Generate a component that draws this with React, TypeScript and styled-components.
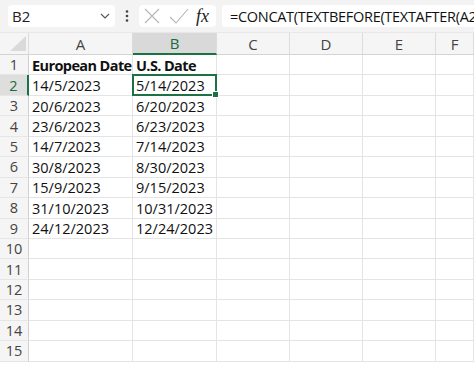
import React from 'react';
import styled, { createGlobalStyle } from 'styled-components';

const GlobalStyle = createGlobalStyle`
  html, body {
    margin: 0;
    padding: 0;
    background: #ffffff;
    font-family: 'Open Sans', 'Noto Sans', Arial, sans-serif;
    overflow: hidden;
  }
`;

const Page = styled.div`
  width: 474px;
  height: 367px;
  overflow: hidden;
`;

const Toolbar = styled.div`
  display: flex;
  align-items: center;
  height: 33px;
  padding: 0 0 0 8px;
  background: #f3f3f3;
  border-bottom: 1px solid #ece6e6;
  box-sizing: border-box;
`;

const Box = styled.div<{ width?: number }>`
  display: flex;
  align-items: center;
  height: 22px;
  width: ${(p) => (p.width ? `${p.width}px` : 'auto')};
  flex-shrink: 0;
  background: #ffffff;
  border-radius: 4px;
  box-sizing: border-box;
`;

const NameBox = styled(Box)`
  justify-content: space-between;
  padding: 0 5px 0 4px;
  font-size: 15px;
  color: #222;
`;

const FormulaBox = styled(Box)`
  flex: 1 1 auto;
  min-width: 0;
  padding-left: 8px;
  margin-left: 6px;
  font-size: 14.5px;
  letter-spacing: -0.3px;
  color: #111;
  white-space: nowrap;
  overflow: hidden;
  border-radius: 4px 0 0 4px;
`;

const Dots = styled.div`
  width: 24px;
  flex-shrink: 0;
  display: flex;
  justify-content: center;
`;

const IconBox = styled(Box)`
  padding: 0 4px;
  justify-content: space-between;
`;

const Fx = styled.span`
  font-family: 'Liberation Serif', 'DejaVu Serif', serif;
  font-style: italic;
  font-size: 18px;
  color: #222;
  margin-right: 3px;
`;

const Sheet = styled.div`
  display: grid;
  grid-template-columns: 29px 104px 84px 73px 73px 73px 1fr;
  grid-template-rows: 22px;
  grid-auto-rows: 20.45px;
  background: #ffffff;
`;

const Corner = styled.div`
  background: #f5f5f5;
  border-bottom: 1px solid #d4d4d4;
  border-right: 1px solid #dcdcdc;
  box-sizing: border-box;
  display: flex;
  align-items: flex-end;
  justify-content: flex-end;
  padding: 0 2px 3px 0;
`;

const ColHead = styled.div<{ active?: boolean }>`
  display: flex;
  align-items: center;
  justify-content: center;
  font-size: 15px;
  color: ${(p) => (p.active ? '#1a6b40' : '#444')};
  background: ${(p) => (p.active ? '#d9d9d9' : '#f5f5f5')};
  border-right: 1px solid #dcdcdc;
  border-bottom: ${(p) => (p.active ? '2px solid #1a7343' : '1px solid #d4d4d4')};
  box-sizing: border-box;
`;

const RowHead = styled.div<{ active?: boolean }>`
  display: flex;
  align-items: center;
  justify-content: center;
  font-size: 14.5px;
  color: ${(p) => (p.active ? '#1a6b40' : '#444')};
  background: ${(p) => (p.active ? '#dedede' : '#f5f5f5')};
  border-right: ${(p) => (p.active ? '2px solid #1a7343' : '1px solid #d0d0d0')};
  border-bottom: 1px solid #e6e6e6;
  box-sizing: border-box;
`;

const Cell = styled.div<{ bold?: boolean; selected?: boolean }>`
  position: relative;
  display: flex;
  align-items: center;
  padding: 1px 0 0 3px;
  font-size: 14.5px;
  font-weight: ${(p) => (p.bold ? 700 : 400)};
  letter-spacing: ${(p) => (p.bold ? '-0.6px' : '0')};
  color: #111;
  border-right: 1px solid #e4e4e4;
  border-bottom: 1px solid #e4e4e4;
  box-sizing: border-box;
  white-space: nowrap;

  ${(p) =>
    p.selected &&
    `
    &::after {
      content: '';
      position: absolute;
      left: -1px;
      top: -1px;
      right: -1px;
      bottom: -1px;
      border: 2px solid #1e7145;
      pointer-events: none;
    }
    &::before {
      content: '';
      position: absolute;
      right: -3px;
      bottom: -3px;
      width: 5px;
      height: 5px;
      background: #1e7145;
      border: 1px solid #fff;
      z-index: 1;
    }
  `}
`;

const cols = ['A', 'B', 'C', 'D', 'E', 'F'];

const rows: [string, string][] = [
  ['European Date', 'U.S. Date'],
  ['14/5/2023', '5/14/2023'],
  ['20/6/2023', '6/20/2023'],
  ['23/6/2023', '6/23/2023'],
  ['14/7/2023', '7/14/2023'],
  ['30/8/2023', '8/30/2023'],
  ['15/9/2023', '9/15/2023'],
  ['31/10/2023', '10/31/2023'],
  ['24/12/2023', '12/24/2023'],
];

const App: React.FC = () => {
  const all = Array.from({ length: 15 }, (_, i) => rows[i] || ['', '']);

  return (
    <Page>
      <GlobalStyle />
      <Toolbar>
        <NameBox width={107}>
          <span>B2</span>
          <svg width="10" height="6" viewBox="0 0 10 6">
            <path d="M1 1l4 4 4-4" fill="none" stroke="#555" strokeWidth="1.1" />
          </svg>
        </NameBox>
        <Dots>
          <svg width="4" height="12" viewBox="0 0 4 12">
            <circle cx="2" cy="1.5" r="1.3" fill="#444" />
            <circle cx="2" cy="6" r="1.3" fill="#444" />
            <circle cx="2" cy="10.5" r="1.3" fill="#444" />
          </svg>
        </Dots>
        <IconBox width={77}>
          <svg width="18" height="16" viewBox="0 0 18 16">
            <path d="M2 1l14 14M16 1L2 15" stroke="#b5b5b5" strokeWidth="1.1" />
          </svg>
          <svg width="20" height="16" viewBox="0 0 20 16">
            <path d="M1 9l6 6L19 1" fill="none" stroke="#b5b5b5" strokeWidth="1.1" />
          </svg>
          <Fx>fx</Fx>
        </IconBox>
        <FormulaBox>=CONCAT(TEXTBEFORE(TEXTAFTER(A2,"/"),"/"),"/",TEXTBEFORE(A2,"/"),"/",TEXTAFTER(A2,"/",2))</FormulaBox>
      </Toolbar>
      <Sheet>
        <Corner>
          <svg width="16" height="15" viewBox="0 0 16 15">
            <path d="M16 0V15H0Z" fill="#dadada" />
          </svg>
        </Corner>
        {cols.map((c) => (
          <ColHead key={c} active={c === 'B'}>
            {c}
          </ColHead>
        ))}
        {all.map((r, i) => (
          <React.Fragment key={i}>
            <RowHead active={i === 1}>{i + 1}</RowHead>
            <Cell bold={i === 0}>{r[0]}</Cell>
            <Cell bold={i === 0} selected={i === 1}>
              {r[1]}
            </Cell>
            <Cell />
            <Cell />
            <Cell />
            <Cell />
          </React.Fragment>
        ))}
      </Sheet>
    </Page>
  );
};

export default App;
